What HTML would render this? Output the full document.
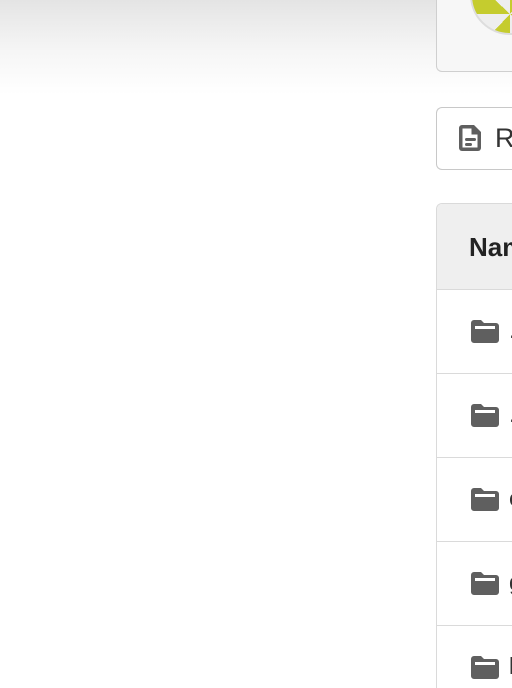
<!DOCTYPE html>
<html><head><style>
html,body{margin:0;padding:0;width:512px;height:688px;overflow:hidden;background:#fff;font-family:"Liberation Sans",sans-serif;}
#w{position:relative;width:512px;height:688px;overflow:hidden;}
.grad{position:absolute;left:0;top:0;width:512px;height:95px;background:linear-gradient(#e4e4e4,#f6f6f6 55%,#fff);}
.card{position:absolute;left:436px;top:0;width:76px;height:72px;border:1px solid #cfcfcf;border-right:none;border-top:none;border-radius:0 0 0 6px;background:#f7f7f7;box-sizing:border-box;overflow:hidden;}
.av{position:absolute;left:470px;top:-45px;width:80px;height:80px;border-radius:50%;background:
conic-gradient(from 0deg at 50% 75%,#c5cc2e 0 12%,#eee 0 25%,#c5cc2e 0 37%,#eee 0 50%,#c5cc2e 0 62%,#eee 0 75%,#c5cc2e 0 87%,#eee 0);border:2px solid #ddd;box-sizing:border-box;}
.btn{position:absolute;left:436px;top:107px;width:76px;height:63px;border:1.5px solid #c8c8c8;border-right:none;border-radius:6px 0 0 6px;box-sizing:border-box;background:#fff;overflow:hidden;}
.btn span{position:absolute;left:58px;top:15px;font-size:27px;color:#333;}
.tbl{position:absolute;left:436px;top:203px;width:76px;height:485px;border:1.5px solid #dadada;border-right:none;border-bottom:none;border-radius:6px 0 0 0;box-sizing:border-box;overflow:hidden;}
.hd{height:86px;background:#efefef;border-bottom:1.5px solid #dadada;box-sizing:border-box;position:relative;}
.hd b{position:absolute;left:32px;top:28px;font-size:26px;color:#222;white-space:nowrap;}
.row{height:84px;border-bottom:1.5px solid #dadada;box-sizing:border-box;position:relative;}
.row svg{position:absolute;left:34px;top:30px;}
.row span{position:absolute;left:72px;top:27px;font-size:23px;color:#333;white-space:nowrap;}
</style></head><body><div id="w">
<div class="grad"></div>
<div class="card"></div>
<div class="av"></div>
<div class="btn">
<svg style="position:absolute;left:22px;top:16px" width="24" height="28" viewBox="0 0 24 28"><path d="M3 1h12l7 7v16a3 3 0 0 1-3 3H3a3 3 0 0 1-3-3V4a3 3 0 0 1 3-3z" fill="#5f5f5f"/><path d="M3.5 4.5h9v6h6v13h-15z" fill="#fff"/><rect x="6" y="14" width="11" height="3" rx="1.5" fill="#5f5f5f"/><rect x="6" y="19" width="7" height="3" rx="1.5" fill="#5f5f5f"/></svg>
<span>R</span></div>
<div class="tbl">
<div class="hd"><b>Name</b></div>
<div class="row"><svg width="28" height="23" viewBox="0 0 28 23"><path d="M3 0h7l3 3h12a3 3 0 0 1 3 3v14a3 3 0 0 1-3 3H3a3 3 0 0 1-3-3V3a3 3 0 0 1 3-3z" fill="#5f5f5f"/><rect x="4" y="6" width="20" height="3" fill="#fff"/></svg><span>.github</span></div>
<div class="row"><svg width="28" height="23" viewBox="0 0 28 23"><path d="M3 0h7l3 3h12a3 3 0 0 1 3 3v14a3 3 0 0 1-3 3H3a3 3 0 0 1-3-3V3a3 3 0 0 1 3-3z" fill="#5f5f5f"/><rect x="4" y="6" width="20" height="3" fill="#fff"/></svg><span>.vscode</span></div>
<div class="row"><svg width="28" height="23" viewBox="0 0 28 23"><path d="M3 0h7l3 3h12a3 3 0 0 1 3 3v14a3 3 0 0 1-3 3H3a3 3 0 0 1-3-3V3a3 3 0 0 1 3-3z" fill="#5f5f5f"/><rect x="4" y="6" width="20" height="3" fill="#fff"/></svg><span>cmd</span></div>
<div class="row"><svg width="28" height="23" viewBox="0 0 28 23"><path d="M3 0h7l3 3h12a3 3 0 0 1 3 3v14a3 3 0 0 1-3 3H3a3 3 0 0 1-3-3V3a3 3 0 0 1 3-3z" fill="#5f5f5f"/><rect x="4" y="6" width="20" height="3" fill="#fff"/></svg><span>git</span></div>
<div class="row" style="border-bottom:none"><svg width="28" height="23" viewBox="0 0 28 23"><path d="M3 0h7l3 3h12a3 3 0 0 1 3 3v14a3 3 0 0 1-3 3H3a3 3 0 0 1-3-3V3a3 3 0 0 1 3-3z" fill="#5f5f5f"/><rect x="4" y="6" width="20" height="3" fill="#fff"/></svg><span>lib</span></div>
</div>
</div></body></html>
